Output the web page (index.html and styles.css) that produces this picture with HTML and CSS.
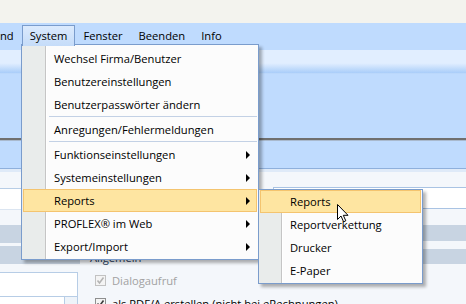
FILE: index.html
```html
<!DOCTYPE html>
<html lang="de">
<head>
  <meta charset="UTF-8">
  <title>PROFLEX - System</title>
  <link rel="stylesheet" href="styles.css">
</head>
<body>
  <div class="titlebar"></div>

  <nav class="menubar">
    <div class="menubar-item cut">nd</div>
    <div class="menubar-item open">System</div>
    <div class="menubar-item">Fenster</div>
    <div class="menubar-item">Beenden</div>
    <div class="menubar-item">Info</div>
  </nav>

  <div class="ribbon"></div>
  <div class="toolbar"></div>
  <div class="splitter"></div>
  <div class="tabstrip"></div>
  <div class="tabline"></div>

  <div class="content">
    <div class="nav">
      <div class="nav-field"></div>
      <div class="nav-band"></div>
      <div class="nav-band second"></div>
      <div class="nav-box"></div>
      <div class="nav-select"></div>
    </div>
    <div class="main">
      <div class="search"></div>
      <div class="main-row">
        <div class="group">
          <div class="group-title">Allgemein</div>
          <div class="check-row disabled">
            <span class="checkbox"><svg width="9" height="9" viewBox="0 0 9 9"><polyline points="1.5,4.5 3.5,7 7.5,1.5" fill="none" stroke="#b4b4b4" stroke-width="1.6"/></svg></span>
            <span>Dialogaufruf</span>
          </div>
          <div class="check-row">
            <span class="checkbox"><svg width="9" height="9" viewBox="0 0 9 9"><polyline points="1.5,4.5 3.5,7 7.5,1.5" fill="none" stroke="#3b3b3b" stroke-width="1.6"/></svg></span>
            <span>als PDF/A erstellen (nicht bei eRechnungen)</span>
          </div>
        </div>
        <div class="side">
          <div class="side-band"></div>
          <div class="side-band second"></div>
        </div>
      </div>
    </div>
  </div>

  <!-- open System menu -->
  <div class="dropdown">
    <div class="menu-item">Wechsel Firma/Benutzer</div>
    <div class="menu-item">Benutzereinstellungen</div>
    <div class="menu-item">Benutzerpasswörter ändern</div>
    <div class="menu-sep"></div>
    <div class="menu-item">Anregungen/Fehlermeldungen</div>
    <div class="menu-sep"></div>
    <div class="menu-item">Funktionseinstellungen<span class="arrow"></span></div>
    <div class="menu-item">Systemeinstellungen<span class="arrow"></span></div>
    <div class="menu-item active">Reports<span class="arrow"></span></div>
    <div class="menu-item">PROFLEX® im Web<span class="arrow"></span></div>
    <div class="menu-item">Export/Import<span class="arrow"></span></div>
  </div>

  <div class="submenu">
    <div class="menu-item active">Reports</div>
    <div class="menu-item">Reportverkettung</div>
    <div class="menu-item">Drucker</div>
    <div class="menu-item">E-Paper</div>
  </div>

  <svg class="cursor" width="13" height="20" viewBox="0 0 13 20">
    <path d="M0.5 0.5 L0.5 15.5 L4 12 L6.6 17.8 L8.8 16.8 L6.3 11.3 L11 11.3 Z" fill="#fff" stroke="#000" stroke-width="1"/>
  </svg>
</body>
</html>
```

FILE: styles.css
```css
* {
  box-sizing: border-box;
}

body {
  margin: 0;
  width: 466px;
  height: 304px;
  overflow: hidden;
  position: relative;
  font-family: "Open Sans", "Noto Sans", sans-serif;
  font-size: 11.2px;
  color: #000;
  background: #f4f7fb;
}

.titlebar {
  height: 23px;
  background: #f3f3ee;
}

.menubar {
  height: 27px;
  background: #bfdbfe;
  display: flex;
  align-items: flex-start;
  padding-top: 2px;
}

.menubar-item {
  height: 21px;
  padding: 0 7px;
  border: 1px solid transparent;
  line-height: 19px;
  white-space: nowrap;
}

.menubar-item.cut {
  margin-left: -8px;
}

.menubar-item.open {
  border-color: #7a9ccc;
  border-bottom: none;
  background: linear-gradient(#dbeafd, #c5dcf9);
  position: relative;
  z-index: 3;
}

.ribbon {
  height: 24px;
  background: linear-gradient(#e1eeff 0, #e1eeff 55%, #a9cdf9 96%, #cfe3fd 100%);
}

.toolbar {
  height: 64px;
  background: #bfdbfe;
}

.splitter {
  height: 3px;
  border-top: 2px solid #6f6f6f;
  background: #a9b9cd;
}

.tabstrip {
  height: 27px;
  background: #bfdbfe;
}

.tabline {
  height: 4px;
  border-top: 1px solid #8fb0dc;
  background: #dfeaf8;
}

.content {
  display: flex;
  height: 132px;
}

/* left navigation column */
.nav {
  width: 80px;
  padding-top: 16px;
}

.nav-field {
  height: 22px;
  background: #fff;
  border-top: 1px solid #b7cde6;
  border-bottom: 1px solid #dbe5f1;
}

.nav-band {
  height: 18px;
  margin-top: 15px;
  background: #c8d4e2;
}

.nav-band.second {
  margin-top: 3px;
}

.nav-box {
  width: 78px;
  height: 25px;
  margin-top: 8px;
  background: #fff;
  border: 1px solid #b7cde6;
  border-left: none;
}

.nav-select {
  width: 78px;
  height: 20px;
  border-right: 1px solid #b7cde6;
  background: linear-gradient(to right, #fff 64px, #b7cde6 64px, #b7cde6 65px, #eef3f9 65px);
}

/* main area */
.main {
  flex: 1;
}

.search {
  height: 22px;
  margin: 15px 0 0 193px;
  background: #fff;
  border: 1px solid #a9c3e3;
  border-right: none;
}

.main-row {
  display: flex;
}

.group {
  width: 343px;
  padding: 42px 0 0 10px;
}

.group-title {
  height: 14px;
  line-height: 14px;
  margin-bottom: 4px;
  color: #1e395b;
}

.check-row {
  display: flex;
  align-items: center;
  gap: 6px;
  height: 23px;
  margin-left: 5px;
  white-space: nowrap;
}

.check-row.disabled {
  color: #a2a2a2;
}

.checkbox {
  width: 11px;
  height: 11px;
  border: 1px solid #8e8f8f;
  background: #f4f4f4;
  display: flex;
  align-items: center;
  justify-content: center;
}

.check-row.disabled .checkbox {
  border-color: #c2c2c2;
}

.side {
  flex: 1;
  padding-top: 16px;
}

.side-band {
  height: 16px;
  background: #c8d4e2;
}

.side-band.second {
  height: 15px;
  margin-top: 8px;
}

/* menus */
.dropdown,
.submenu {
  position: absolute;
  border: 1px solid #7a9ccc;
  box-shadow: 3px 3px 3px rgba(0, 0, 0, 0.3);
}

.dropdown {
  left: 21px;
  top: 44px;
  width: 238px;
  padding: 2px 1px 1px;
  z-index: 2;
  background: linear-gradient(to right, #e9eceb 0, #e9eceb 23px, #c5c5c5 23px, #c5c5c5 24px, #fff 24px, #fff 25px, #fcfcfc 25px);
}

.submenu {
  left: 258px;
  top: 189px;
  width: 165px;
  padding: 0 1px 1px;
  z-index: 4;
  background: linear-gradient(to right, #e9eceb 0, #e9eceb 22px, #c5c5c5 22px, #c5c5c5 23px, #fff 23px, #fff 24px, #fcfcfc 24px);
}

.menu-item {
  display: flex;
  align-items: center;
  height: 23px;
  padding: 0 6px 0 30px;
  border: 1px solid transparent;
  white-space: nowrap;
}

.submenu .menu-item {
  padding-left: 29px;
}

.menu-item.active {
  background: #fee5a1;
  border-color: #f4c46f;
}

.menu-sep {
  height: 1px;
  margin: 0 0 1px 26px;
  background: #c3d1e5;
}

.arrow {
  margin-left: auto;
  border-style: solid;
  border-width: 4px 0 4px 4px;
  border-color: transparent transparent transparent #000;
}

.cursor {
  position: absolute;
  left: 337px;
  top: 204px;
  z-index: 5;
}
```
